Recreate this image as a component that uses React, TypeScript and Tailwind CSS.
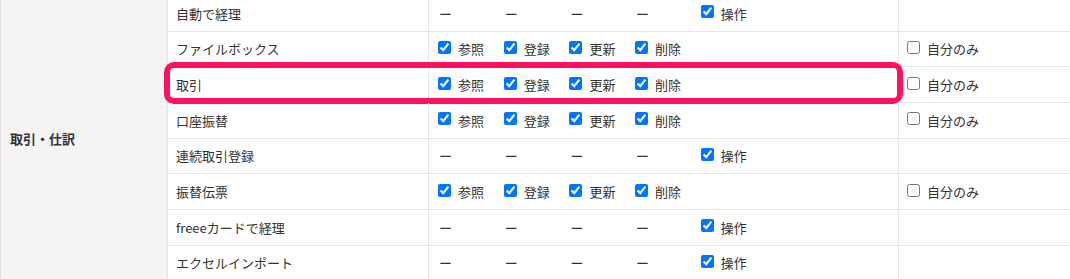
import React from "react";

type Row = { name: string; kind: "crud" | "op"; self?: boolean; highlight?: boolean };

const rows: Row[] = [
  { name: "自動で経理", kind: "op" },
  { name: "ファイルボックス", kind: "crud", self: true },
  { name: "取引", kind: "crud", self: true, highlight: true },
  { name: "口座振替", kind: "crud", self: true },
  { name: "連続取引登録", kind: "op" },
  { name: "振替伝票", kind: "crud", self: true },
  { name: "freeeカードで経理", kind: "op" },
  { name: "エクセルインポート", kind: "op" },
];

function Check({ checked, label, wide }: { checked: boolean; label: string; wide?: boolean }) {
  return (
    <label className={`flex items-center shrink-0 whitespace-nowrap ${wide ? "" : "w-[65.7px]"}`}>
      <input
        type="checkbox"
        defaultChecked={checked}
        className="m-0 w-[13px] h-[13px] shrink-0 -mt-[3px]"
      />
      <span className="ml-[7px]">{label}</span>
    </label>
  );
}

function Dash() {
  return <span className="w-[65.7px] shrink-0 pl-[1px]">ー</span>;
}

export default function App() {
  return (
    <div
      className="w-[1070px] h-[279px] overflow-hidden bg-white text-[13px] text-[#323232]"
      style={{ fontFamily: '"Noto Sans CJK JP", "Noto Sans", sans-serif' }}
    >
      <div className="flex -mt-[4px] border-l border-[#e4e4e4]">
        <div className="w-[167px] shrink-0 bg-[#f5f3f3] border-r-2 border-[#e8e8e8] flex items-center pl-[9px] font-bold">
          取引・仕訳
        </div>
        <div className="flex-1 flex flex-col">
          {rows.map((r, i) => (
            <div key={i} className="relative flex h-[35.7px] border-b border-[#e6e6e6]">
              <div className="w-[261px] shrink-0 border-r border-[#e6e6e6] flex items-center pl-[8px]">
                {r.name}
              </div>
              <div className="w-[470px] shrink-0 border-r border-[#e6e6e6] flex items-center pl-[9px]">
                {r.kind === "crud" ? (
                  <>
                    <Check checked label="参照" />
                    <Check checked label="登録" />
                    <Check checked label="更新" />
                    <Check checked label="削除" />
                  </>
                ) : (
                  <>
                    <Dash />
                    <Dash />
                    <Dash />
                    <Dash />
                    <Check checked label="操作" />
                  </>
                )}
              </div>
              <div className="flex-1 flex items-center pl-[8px]">
                {r.self && <Check checked={false} label="自分のみ" wide />}
              </div>
              {r.highlight && (
                <div className="absolute left-[-4px] top-[-5px] w-[739px] h-[42px] border-[6px] border-[#ff1160] rounded-[10px] pointer-events-none" />
              )}
            </div>
          ))}
        </div>
      </div>
    </div>
  );
}
